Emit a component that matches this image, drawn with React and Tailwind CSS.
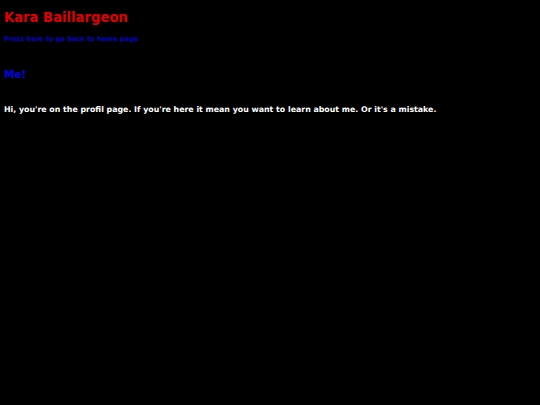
export default function App() {
  return (
    <div className="min-h-screen bg-black px-1 pt-[10px] font-['DejaVu_Sans',sans-serif] font-bold">
      <h1 className="text-[13.2px] leading-4 text-[#e00000]">Kara Baillargeon</h1>
      <a href="#" className="mt-[9px] block text-[6.6px] leading-[9px] text-[#0000c8]">
        Press here to go back to home page
      </a>
      <h2 className="mt-[23px] text-[10.5px] leading-[14px] text-[#0000e0]">Me!</h2>
      <p className="mt-[24px] text-[7.85px] leading-[10px] text-white">
        Hi, you're on the profil page. If you're here it mean you want to learn about me. Or it's a mistake.
      </p>
    </div>
  );
}
